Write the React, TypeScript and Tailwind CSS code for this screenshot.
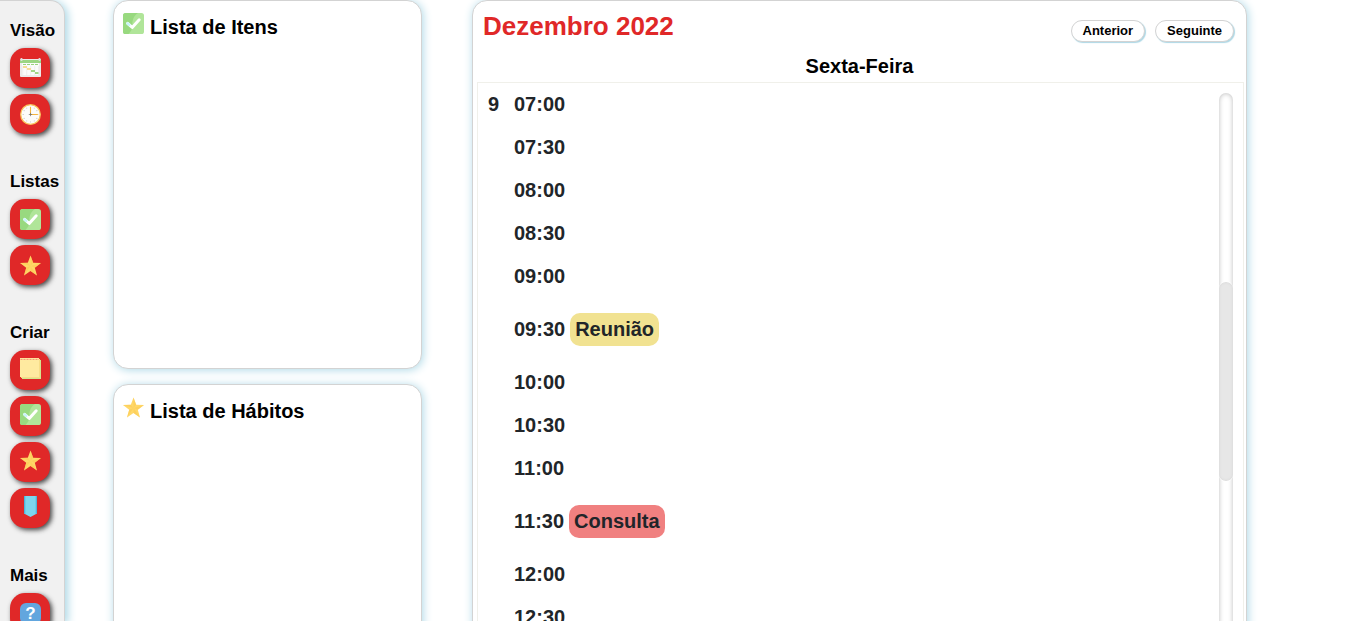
import React, { ReactNode } from "react";

const STAR = "10.5,0.5 13.2,7.8 21,8 14.8,12.7 17,20.5 10.5,15.9 4,20.5 6.2,12.7 0,8 7.8,7.8";

function Icon({ children }: { children: ReactNode }) {
  return (
    <svg viewBox="0 0 21 21" className="block h-[21px] w-[21px] shrink-0" aria-hidden="true">
      {children}
    </svg>
  );
}

function CheckIcon() {
  return (
    <Icon>
      <rect width="21" height="21" rx="2.6" fill="#b0e599" />
      <path d="M2.6 0H15C10 3 9 9 9.5 12C9.8 16 7.5 19 5.5 21H2.6A2.6 2.6 0 0 1 0 18.4V2.6A2.6 2.6 0 0 1 2.6 0Z" fill="#98d97f" />
      <path d="M4.6 10.4L9.2 14.4L16.2 6.8" fill="none" stroke="#fff" strokeWidth="3" strokeLinecap="round" strokeLinejoin="round" />
      <path d="M4.6 10.4L6.2 11.8" stroke="#c9f4fb" strokeWidth="2.6" strokeLinecap="round" />
    </Icon>
  );
}

function StarIcon() {
  return (
    <Icon>
      <polygon points={STAR} fill="#ffd869" />
      <path d="M10.5 0.5L13.2 7.8L10.5 11ZM21 8L14.8 12.7L10.5 11ZM17 20.5L10.5 15.9V11ZM4 20.5L6.2 12.7L10.5 11ZM0 8L7.8 7.8L10.5 11Z" fill="#fbcb55" opacity="0.6" />
    </Icon>
  );
}

function CalendarIcon() {
  return (
    <Icon>
      <rect x="0" y="1" width="21" height="18" rx="1" fill="#eceaea" />
      <rect x="2" y="5" width="17" height="12" fill="#fbfbfb" />
      <rect x="0" y="2" width="21" height="3" fill="#9bd583" />
      <rect x="0.5" y="0" width="2" height="3" rx="0.8" fill="#dedede" />
      <rect x="18.5" y="0" width="2" height="3" rx="0.8" fill="#dedede" />
      <path d="M3 6.5H18" stroke="#9ad27f" strokeWidth="1" strokeDasharray="3 1" />
      <path d="M2.7 8V17M6.700 8V17M10.700 8V17M14.700 8V17M18.500 8V17" stroke="#e4e2e2" strokeWidth="0.500" />
      <rect x="3" y="8" width="4" height="2" fill="#f6dc94" />
      <rect x="7" y="10" width="4" height="2" fill="#f6dc94" />
      <rect x="11" y="12" width="4" height="2" fill="#a2d588" />
      <rect x="15" y="14" width="3.500" height="2" fill="#a2d588" />
    </Icon>
  );
}

const TICKS = Array.from({ length: 12 }, (_, i) => {
  const angle = (i * Math.PI) / 6;
  return { x: 10.5 + 7.4 * Math.sin(angle), y: 10.5 - 7.4 * Math.cos(angle) };
});

function ClockIcon() {
  return (
    <Icon>
      <circle cx="10.5" cy="10.5" r="9.8" fill="#fdfcfa" stroke="#f9c45c" strokeWidth="1.3" />
      {TICKS.map((t, i) => (
        <circle key={i} cx={t.x} cy={t.y} r="0.45" fill="#8c8c8c" />
      ))}
      <path d="M10.5 3V10.5H17.8" fill="none" stroke="#f7b53c" strokeWidth="1.1" />
      <path d="M8.8 10.5H12.2M10.5 8.8V12.2" stroke="#6f6f6f" strokeWidth="0.7" />
    </Icon>
  );
}

function NoteIcon() {
  return (
    <Icon>
      <rect x="2" y="2" width="19" height="19" fill="#d4e68e" />
      <rect x="1" y="1" width="19" height="19" fill="#f7dd88" />
      <rect x="0" y="0" width="19" height="19" fill="#ffeaa0" />
      <path d="M0.5 1.4H19" stroke="#ee7d62" strokeWidth="0.8" strokeDasharray="2 1" />
    </Icon>
  );
}

function BookmarkIcon() {
  return (
    <Icon>
      <path d="M4 0H17V17.5L10.5 21L4 17.5Z" fill="#7dd6ee" />
      <path d="M4 0H5.3V18.2L4 17.5ZM15.7 0H17V17.5L15.7 18.2Z" fill="#4db5da" />
    </Icon>
  );
}

function HelpIcon() {
  return (
    <span className="flex h-[21px] w-[21px] items-center justify-center rounded-md bg-[#62a6de] text-[17px] leading-[21px] font-bold text-white">
      ?
    </span>
  );
}

type Action = { label: string; icon: ReactNode };

const SECTIONS: { title: string; raised?: boolean; actions: Action[] }[] = [
  {
    title: "Visão",
    actions: [
      { label: "Mês", icon: <CalendarIcon /> },
      { label: "Dia", icon: <ClockIcon /> },
    ],
  },
  {
    title: "Listas",
    actions: [
      { label: "Lista de Itens", icon: <CheckIcon /> },
      { label: "Lista de Hábitos", icon: <StarIcon /> },
    ],
  },
  {
    title: "Criar",
    raised: true,
    actions: [
      { label: "Criar nota", icon: <NoteIcon /> },
      { label: "Criar item", icon: <CheckIcon /> },
      { label: "Criar hábito", icon: <StarIcon /> },
      { label: "Criar marcador", icon: <BookmarkIcon /> },
    ],
  },
  { title: "Mais", actions: [{ label: "Ajuda", icon: <HelpIcon /> }] },
];

function Sidebar() {
  return (
    <nav className="flex w-[65px] shrink-0 flex-col gap-[38px] rounded-tr-[15px] border-t border-r border-[#d3d3d3] bg-[#f1f1f1] pt-5 pl-[10px] shadow-[2px_2px_8px_1px_lightblue]">
      {SECTIONS.map((section) => (
        <section key={section.title}>
          <h2 className="mb-[7px] text-[17px] leading-5 font-bold">{section.title}</h2>
          <div className="flex flex-col gap-[6px]">
            {section.actions.map((action) => (
              <button
                key={action.label}
                type="button"
                aria-label={action.label}
                className={
                  "flex h-10 w-10 items-start justify-start rounded-[15px] bg-[#e02828] pl-[10px] shadow-[2px_2px_5px_#444] " +
                  (section.raised ? "pt-2" : "pt-[10px]")
                }
              >
                {action.icon}
              </button>
            ))}
          </div>
        </section>
      ))}
    </nav>
  );
}

function ListCard({ title, icon }: { title: string; icon: ReactNode }) {
  return (
    <section className="min-h-[369px] rounded-[15px] border border-[#d3d3d3] bg-white px-[9px] py-3 shadow-[1px_1px_10px_lightblue]">
      <header className="flex items-start gap-[6px]">
        {icon}
        <h2 className="text-[20px] leading-7 font-bold">{title}</h2>
      </header>
    </section>
  );
}

type Slot = { time: string; event?: string; tone?: string };

const SLOTS: Slot[] = [
  { time: "07:00" },
  { time: "07:30" },
  { time: "08:00" },
  { time: "08:30" },
  { time: "09:00" },
  { time: "09:30", event: "Reunião", tone: "bg-[#f1e291]" },
  { time: "10:00" },
  { time: "10:30" },
  { time: "11:00" },
  { time: "11:30", event: "Consulta", tone: "bg-[#f08080]" },
  { time: "12:00" },
  { time: "12:30" },
];

function PagerButton({ children }: { children: ReactNode }) {
  return (
    <button
      type="button"
      className="rounded-full border border-[#d3d3d3] bg-white px-[11px] text-[13px] leading-5 font-bold shadow-[1px_1px_1px_lightblue]"
    >
      {children}
    </button>
  );
}

function DayPanel() {
  return (
    <section className="flex flex-col rounded-[15px] border border-[#d3d3d3] bg-white pt-[10px] pr-[2px] pl-1 shadow-[1px_1px_10px_lightblue]">
      <header className="flex items-end justify-between pr-[10px] pl-[6px]">
        <h1 className="text-[26px] leading-[31px] font-bold text-[#e02828]">Dezembro 2022</h1>
        <div className="flex gap-[10px]">
          <PagerButton>Anterior</PagerButton>
          <PagerButton>Seguinte</PagerButton>
        </div>
      </header>
      <h2 className="my-1 pt-2 pr-[2px] text-center text-[20px] leading-6 font-bold">Sexta-Feira</h2>
      <div className="flex grow items-stretch justify-between border border-[#f0f0ea] pr-[10px]">
        <table className="h-fit text-[20px] leading-[23px] font-bold text-[#212529]">
          <tbody>
            {SLOTS.map((slot, i) => (
              <tr key={slot.time}>
                {i === 0 && (
                  <th scope="rowgroup" rowSpan={SLOTS.length} className="w-9 py-[10px] pl-[10px] text-left align-top">
                    9
                  </th>
                )}
                <td className="py-[10px] whitespace-nowrap">
                  {slot.time}
                  {slot.event && (
                    <span className={"my-[5px] ml-[5px] inline-block rounded-[10px] p-[5px] " + slot.tone}>
                      {slot.event}
                    </span>
                  )}
                </td>
              </tr>
            ))}
          </tbody>
        </table>
        <div className="mt-[10px] w-[14px] rounded-t-full bg-white pt-[188px] shadow-[inset_0_0_5px_#bbb]">
          <div className="h-[201px] rounded-full border-y border-white bg-[#e7e7e7] shadow-[inset_0_0_3px_#d4d4d4]" />
        </div>
      </div>
    </section>
  );
}

export default function App() {
  return (
    <div className="flex h-screen overflow-hidden bg-white font-['Liberation_Sans',Arial,sans-serif] text-black">
      <Sidebar />
      <main className="grid h-fit grow grid-cols-[309fr_775fr] gap-[50px] pr-[99px] pl-12">
        <div className="flex flex-col gap-[15px]">
          <ListCard title="Lista de Itens" icon={<CheckIcon />} />
          <ListCard title="Lista de Hábitos" icon={<StarIcon />} />
        </div>
        <DayPanel />
      </main>
    </div>
  );
}
